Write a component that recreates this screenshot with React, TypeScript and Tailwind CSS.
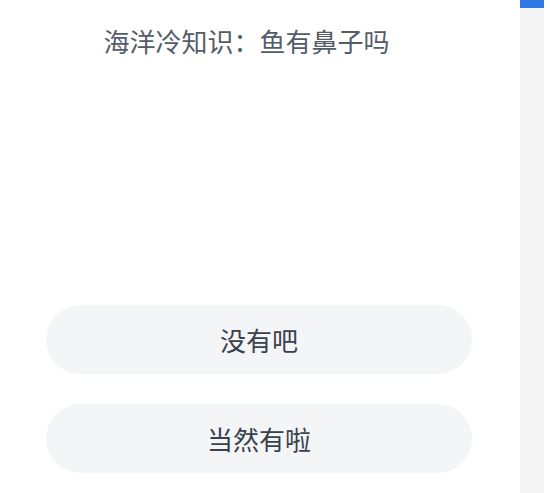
const font = { fontFamily: '"Noto Sans CJK SC", "Noto Sans", sans-serif' }

const options = ['没有吧', '当然有啦']

export default function App() {
    return (
        <div className="flex h-[493px] w-[550px] bg-white" style={font}>
            {/* 题目区域 */}
            <div className="flex w-[520px] flex-col">
                <h1 className="mt-[22px] pr-[27px] text-center text-[26px] leading-[38px] font-normal text-[#545c69]">
                    海洋冷知识：鱼有鼻子吗
                </h1>
                <div className="mt-[245px] flex flex-col gap-[30px] pl-[46px] pr-[48px]">
                    {options.map((opt) => (
                        <button
                            key={opt}
                            className="flex h-[69px] items-center justify-center rounded-full bg-[#f4f5f7] text-[26px] text-[#3a414c]"
                        >
                            {opt}
                        </button>
                    ))}
                </div>
            </div>
            {/* 滚动条 */}
            <div className="flex w-[24px] flex-col bg-[#f5f5f5]">
                <div className="h-[8px] bg-[#2f7ae5]" />
            </div>
        </div>
    )
}
